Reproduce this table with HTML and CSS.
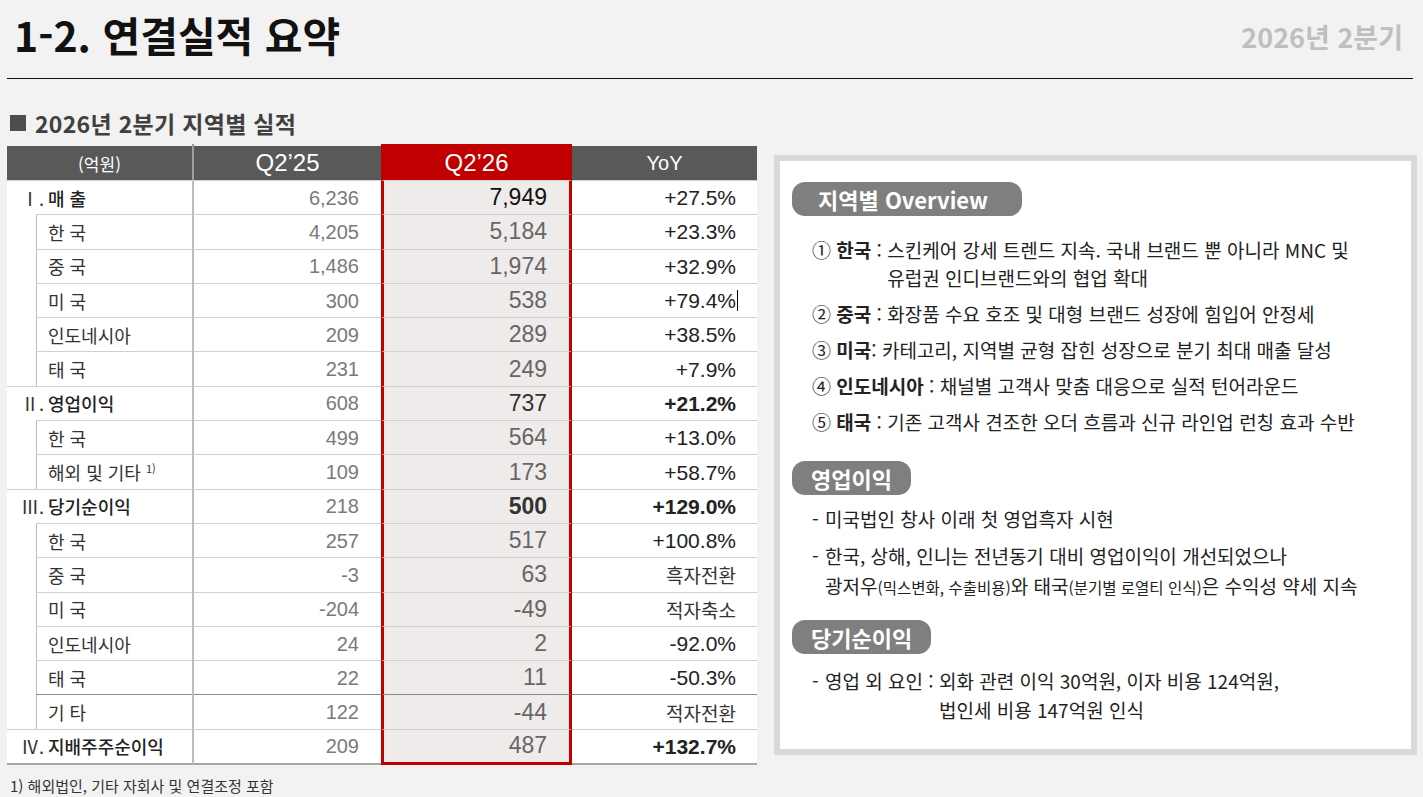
FILE: index.html
```html
<!DOCTYPE html>
<html lang="ko">
<head>
<meta charset="utf-8">
<title>1-2. 연결실적 요약</title>
<link rel="stylesheet" href="styles.css">
</head>
<body>
<header class="top">
  <h1 class="title">1-2. 연결실적 요약</h1>
  <div class="period">2026년 2분기</div>
</header>
<main class="main">
  <section class="left">
    <h2 class="subtitle"><span class="sq"></span>2026년 2분기 지역별 실적</h2>
    <div class="tbl">
      <div class="row head">
        <div class="c c1 unit">(억원)</div>
        <div class="c c2">Q2’25</div>
        <div class="c c3">Q2’26</div>
        <div class="c c4 yoy">YoY</div>
      </div>

      <div class="row sec">
        <div class="c c1"><span class="rn">Ⅰ.</span>매 출</div>
        <div class="c c2">6,236</div>
        <div class="c c3 v-black">7,949</div>
        <div class="c c4">+27.5%</div>
      </div>
      <div class="row sub">
        <div class="c c1"><span class="lbl">한 국</span></div>
        <div class="c c2">4,205</div>
        <div class="c c3">5,184</div>
        <div class="c c4">+23.3%</div>
      </div>
      <div class="row sub">
        <div class="c c1"><span class="lbl">중 국</span></div>
        <div class="c c2">1,486</div>
        <div class="c c3">1,974</div>
        <div class="c c4">+32.9%</div>
      </div>
      <div class="row sub">
        <div class="c c1"><span class="lbl">미 국</span></div>
        <div class="c c2">300</div>
        <div class="c c3">538</div>
        <div class="c c4">+79.4%<span class="caret"></span></div>
      </div>
      <div class="row sub">
        <div class="c c1"><span class="lbl">인도네시아</span></div>
        <div class="c c2">209</div>
        <div class="c c3">289</div>
        <div class="c c4">+38.5%</div>
      </div>
      <div class="row sub">
        <div class="c c1"><span class="lbl">태 국</span></div>
        <div class="c c2">231</div>
        <div class="c c3">249</div>
        <div class="c c4">+7.9%</div>
      </div>

      <div class="row sec">
        <div class="c c1"><span class="rn">Ⅱ.</span>영업이익</div>
        <div class="c c2">608</div>
        <div class="c c3 v-dark">737</div>
        <div class="c c4 b">+21.2%</div>
      </div>
      <div class="row sub">
        <div class="c c1"><span class="lbl">한 국</span></div>
        <div class="c c2">499</div>
        <div class="c c3">564</div>
        <div class="c c4">+13.0%</div>
      </div>
      <div class="row sub">
        <div class="c c1"><span class="lbl">해외 및 기타 <sup class="fn">1)</sup></span></div>
        <div class="c c2">109</div>
        <div class="c c3">173</div>
        <div class="c c4">+58.7%</div>
      </div>

      <div class="row sec">
        <div class="c c1"><span class="rn">Ⅲ.</span>당기순이익</div>
        <div class="c c2">218</div>
        <div class="c c3 v-bold">500</div>
        <div class="c c4 b">+129.0%</div>
      </div>
      <div class="row sub">
        <div class="c c1"><span class="lbl">한 국</span></div>
        <div class="c c2">257</div>
        <div class="c c3">517</div>
        <div class="c c4">+100.8%</div>
      </div>
      <div class="row sub">
        <div class="c c1"><span class="lbl">중 국</span></div>
        <div class="c c2">-3</div>
        <div class="c c3">63</div>
        <div class="c c4 kr">흑자전환</div>
      </div>
      <div class="row sub">
        <div class="c c1"><span class="lbl">미 국</span></div>
        <div class="c c2">-204</div>
        <div class="c c3">-49</div>
        <div class="c c4 kr">적자축소</div>
      </div>
      <div class="row sub">
        <div class="c c1"><span class="lbl">인도네시아</span></div>
        <div class="c c2">24</div>
        <div class="c c3">2</div>
        <div class="c c4">-92.0%</div>
      </div>
      <div class="row sub">
        <div class="c c1"><span class="lbl">태 국</span></div>
        <div class="c c2">22</div>
        <div class="c c3">11</div>
        <div class="c c4">-50.3%</div>
      </div>
      <div class="row sub dk">
        <div class="c c1"><span class="lbl">기 타</span></div>
        <div class="c c2">122</div>
        <div class="c c3">-44</div>
        <div class="c c4 kr">적자전환</div>
      </div>

      <div class="row sec last">
        <div class="c c1"><span class="rn">Ⅳ.</span>지배주주순이익</div>
        <div class="c c2">209</div>
        <div class="c c3">487</div>
        <div class="c c4 b">+132.7%</div>
      </div>
    </div>
    <p class="note">1) 해외법인, 기타 자회사 및 연결조정 포함</p>
  </section>

  <aside class="box">
    <div class="pillrow"><span class="pill wide">지역별 Overview</span></div>

    <div class="item first">
      <span class="lab">① <b>한국</b> : </span>
      <span class="txt">스킨케어 강세 트렌드 지속. 국내 브랜드 뿐 아니라 MNC 및<br>유럽권 인디브랜드와의 협업 확대</span>
    </div>
    <div class="item">
      <span class="lab">② <b>중국</b> : </span>
      <span class="txt">화장품 수요 호조 및 대형 브랜드 성장에 힘입어 안정세</span>
    </div>
    <div class="item">
      <span class="lab">③ <b>미국</b>: </span>
      <span class="txt">카테고리, 지역별 균형 잡힌 성장으로 분기 최대 매출 달성</span>
    </div>
    <div class="item">
      <span class="lab">④ <b>인도네시아</b> : </span>
      <span class="txt">채널별 고객사 맞춤 대응으로 실적 턴어라운드</span>
    </div>
    <div class="item">
      <span class="lab">⑤ <b>태국</b> : </span>
      <span class="txt">기존 고객사 견조한 오더 흐름과 신규 라인업 런칭 효과 수반</span>
    </div>

    <div class="pillrow p2"><span class="pill">영업이익</span></div>
    <div class="bul b1">
      <span class="dash">-</span>
      <span class="txt">미국법인 창사 이래 첫 영업흑자 시현</span>
    </div>
    <div class="bul b2">
      <span class="dash">-</span>
      <span class="txt">한국, 상해, 인니는 전년동기 대비 영업이익이 개선되었으나<br>광저우<span class="sm">(믹스변화, 수출비용)</span>와 태국<span class="sm">(분기별 로열티 인식)</span>은 수익성 약세 지속</span>
    </div>

    <div class="pillrow p3"><span class="pill">당기순이익</span></div>
    <div class="bul b3">
      <span class="dash">-</span>
      <span class="lab">영업 외 요인 : </span>
      <span class="txt">외화 관련 이익 30억원, 이자 비용 124억원,<br>법인세 비용 147억원 인식</span>
    </div>
  </aside>
</main>
</body>
</html>
```

FILE: styles.css
```css
html, body {
  margin: 0;
  padding: 0;
  background: #f2f2f2;
  overflow: hidden;
}

body {
  font-family: "Noto Sans CJK KR", "Noto Sans", sans-serif;
  color: #222;
  width: 1423px;
  height: 797px;
}

/* ---------- header ---------- */
.top {
  display: flex;
  justify-content: space-between;
  align-items: flex-start;
  box-sizing: border-box;
  height: 79px;
  margin: 0 10px 0 7px;
  padding: 14px 10px 0 7px;
  border-bottom: 1px solid #111;
}

.title {
  margin: 0;
  font-size: 41px;
  line-height: 40px;
  font-weight: 700;
  color: #111;
  letter-spacing: 0;
}

.period {
  margin-top: 8px;
  font-size: 27px;
  line-height: 30px;
  font-weight: 700;
  color: #bfbfbf;
}

/* ---------- layout ---------- */
.main {
  display: flex;
  align-items: flex-start;
  padding-left: 7px;
}

.left {
  width: 750px;
}

.subtitle {
  display: flex;
  align-items: center;
  margin: 30px 0 7px 3px;
  font-size: 23px;
  line-height: 28px;
  font-weight: 700;
  color: #404040;
  letter-spacing: 0.3px;
}

.sq {
  width: 16px;
  height: 16px;
  background: #4d4d4d;
  margin-right: 9px;
}

/* ---------- table ---------- */
.tbl {
  font-family: "Liberation Sans", "Noto Sans CJK KR", sans-serif;
  background: #fff;
}

.row {
  display: flex;
  height: 34.3px;
}

.c {
  box-sizing: border-box;
  display: flex;
  align-items: center;
  justify-content: flex-end;
  border-top: 1px solid #d0d0d0;
  line-height: 1;
  white-space: nowrap;
}

.c1 {
  width: 187px;
  justify-content: flex-start;
  border-right: 2px solid #bdbdbd;
  font-family: "Noto Sans CJK KR", sans-serif;
  font-size: 18px;
  color: #222;
}

.c2 {
  width: 187px;
  padding-right: 22px;
  font-size: 20px;
  color: #7a7a7a;
}

.c3 {
  width: 191px;
  padding-right: 22px;
  background: #efebea;
  border-left: 3px solid #c00000;
  border-right: 3px solid #c00000;
  font-size: 23px;
  color: #666;
}

.c4 {
  width: 185px;
  padding-right: 21px;
  font-size: 21px;
  color: #222;
}

.c4.b { font-weight: 700; }
.c4.kr {
  font-family: "Noto Sans CJK KR", sans-serif;
  font-size: 19px;
  color: #333;
}

.v-black { color: #111; }
.v-dark { color: #333; }
.v-bold { color: #333; font-weight: 700; }

/* header row */
.head {
  height: 36px;
}

.head .c {
  border-top: none;
  justify-content: center;
  padding: 2px 0 0 0;
  color: #fff;
  background: linear-gradient(#f2f2f2 0 2px, #595959 2px);
  font-size: 24px;
}

.head .c1 {
  border-right: 2px solid #9e9e9e;
  font-size: 17px;
}

.head .c3 {
  background: #c00000;
  border-left-color: #c00000;
  border-right-color: #c00000;
}

.head .yoy {
  font-size: 20px;
}

/* section rows */
.sec .c1 {
  font-weight: 500;
}

.rn {
  display: inline-block;
  width: 41px;
  padding-right: 4px;
  box-sizing: border-box;
  text-align: right;
  font-weight: 400;
  color: #333;
}

/* sub rows: indent area without horizontal line */
.sub .c1 {
  border-top: none;
  align-items: stretch;
}

.lbl {
  display: flex;
  align-items: center;
  flex: 1;
  margin-left: 29px;
  padding-left: 11px;
  border-left: 1px solid #bdbdbd;
  border-top: 1px solid #d0d0d0;
  color: #333;
}

.fn {
  font-size: 11px;
  margin-left: 5px;
  position: relative;
  top: -4px;
  vertical-align: baseline;
}

.dk .c2, .dk .c3, .dk .c4, .dk .lbl {
  border-top-color: #8a8a8a;
}

.last {
  height: 36.3px;
}

.last .c {
  border-bottom: 2px solid #a6a6a6;
}

.last .c3 {
  border-bottom: 3px solid #c00000;
}

.caret {
  display: inline-block;
  width: 1px;
  height: 21px;
  background: #000;
  margin-left: 1px;
  margin-right: -2px;
}

.note {
  margin: 11px 0 0 3px;
  font-size: 15px;
  line-height: 20px;
  color: #333;
}

/* ---------- right box ---------- */
.box {
  box-sizing: border-box;
  width: 643px;
  height: 600px;
  margin: 76px 0 0 17px;
  padding: 21px 12px 0 12px;
  border: 6px solid #d9d9d9;
  background: #fff;
  color: #222;
  font-size: 19px;
}

.pillrow {
  height: 34px;
}

.pill {
  display: inline-block;
  height: 34px;
  line-height: 34px;
  padding: 0 19px;
  border-radius: 13px;
  background: #7f7f7f;
  color: #fff;
  font-size: 22px;
  font-weight: 700;
}

.pill.wide {
  padding: 0 34px 0 26px;
}

.item {
  display: flex;
  padding-left: 20px;
  margin-top: 8px;
  line-height: 28px;
  white-space: nowrap;
}

.item.first {
  margin-top: 20px;
}

.lab {
  white-space: pre;
}

.lab b {
  font-weight: 700;
}

.p2 { margin-top: 25px; }
.p3 { margin-top: 18px; }

.bul {
  display: flex;
  padding-left: 20px;
  line-height: 28px;
  white-space: nowrap;
}

.dash {
  width: 13px;
}

.b1 { margin-top: 10px; }
.b2 { margin-top: 8px; line-height: 30px; }
.b3 { margin-top: 12px; line-height: 29px; }

.sm {
  font-size: 15.5px;
}
```
